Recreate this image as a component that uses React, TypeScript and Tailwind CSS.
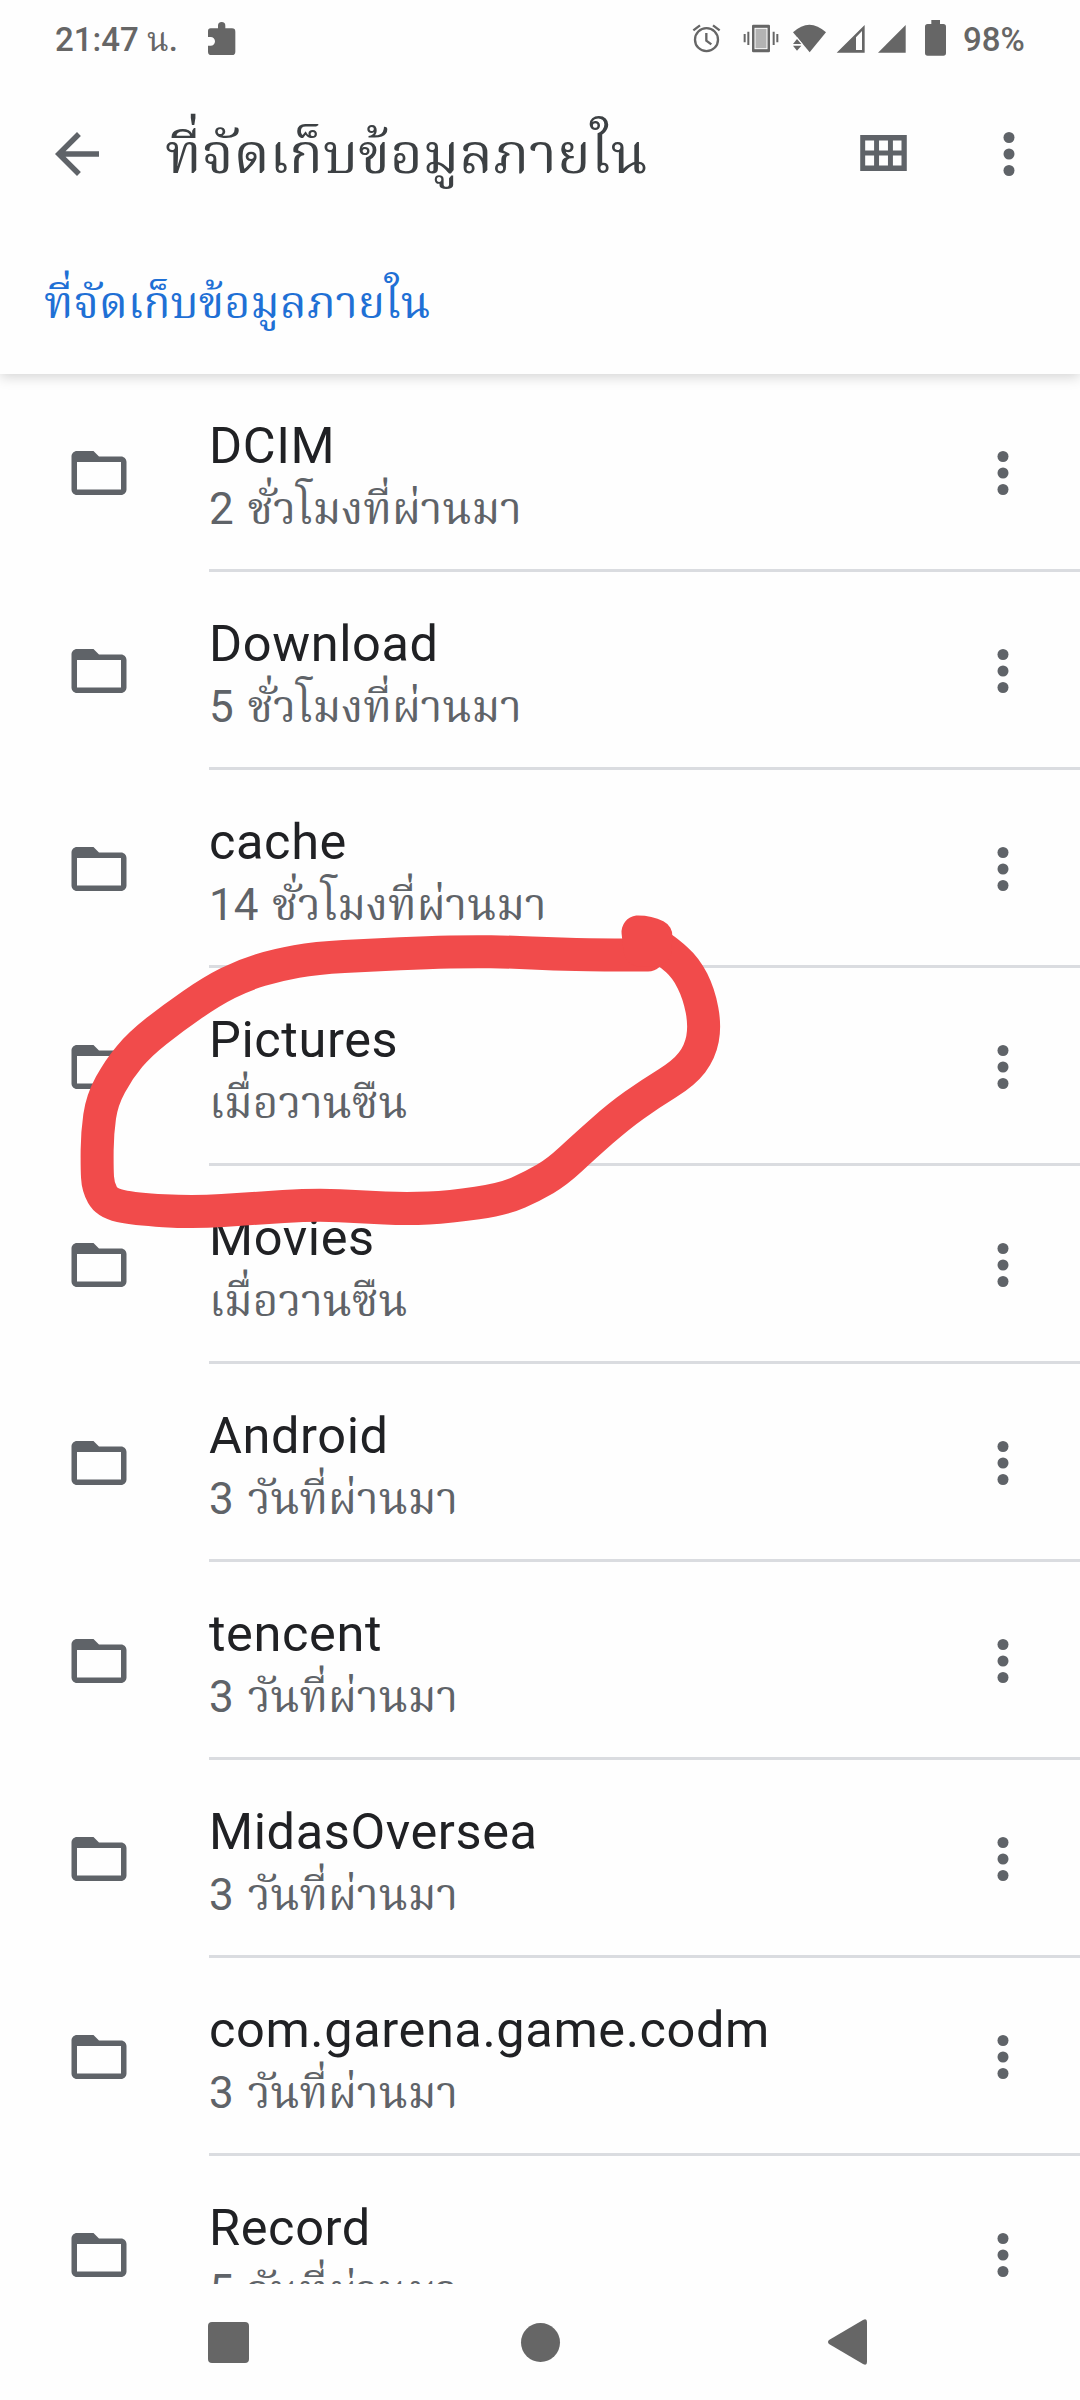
interface FolderItem {
  name: string;
  modified: string;
}

const folders: FolderItem[] = [
  { name: "DCIM", modified: "2 ชั่วโมงที่ผ่านมา" },
  { name: "Download", modified: "5 ชั่วโมงที่ผ่านมา" },
  { name: "cache", modified: "14 ชั่วโมงที่ผ่านมา" },
  { name: "Pictures", modified: "เมื่อวานซืน" },
  { name: "Movies", modified: "เมื่อวานซืน" },
  { name: "Android", modified: "3 วันที่ผ่านมา" },
  { name: "tencent", modified: "3 วันที่ผ่านมา" },
  { name: "MidasOversea", modified: "3 วันที่ผ่านมา" },
  { name: "com.garena.game.codm", modified: "3 วันที่ผ่านมา" },
  { name: "Record", modified: "5 วันที่ผ่านมา" },
];

// Points of the hand-drawn marker stroke, in screen pixels
const markerPoints: [number, number][] = [
  [648, 955], [598, 955], [554, 954], [510, 952], [472, 951.5], [428, 952.5], [372, 955],
  [316, 958], [277, 965], [244, 975], [212, 991], [173, 1018], [140, 1044],
  [119, 1069], [102, 1100], [97.3, 1133], [97, 1167], [98, 1187], [107, 1203],
  [134, 1209], [194, 1212.5], [251, 1208.5], [316, 1204.5], [363, 1207], [407, 1209],
  [450, 1207], [504, 1199], [533, 1186], [557, 1172], [585, 1146], [619, 1116],
  [650, 1094], [684, 1073], [700, 1052], [705, 1026], [699, 994], [686, 968],
  [668, 952], [656, 944],
];

// Smooths the points with quadratic curves through their midpoints
const toPath = (points: [number, number][]) => {
  let d = `M${points[0][0]} ${points[0][1]}`;
  for (let i = 1; i < points.length - 1; i++) {
    const [x, y] = points[i];
    const [nx, ny] = points[i + 1];
    d += ` Q${x} ${y} ${(x + nx) / 2} ${(y + ny) / 2}`;
  }
  const last = points[points.length - 1];
  return `${d} L${last[0]} ${last[1]}`;
};

const MoreIcon = () => (
  <svg viewBox="0 0 24 24" className="size-[66px] shrink-0 fill-[#5f6368]">
    <circle cx="12" cy="6" r="2" />
    <circle cx="12" cy="12" r="2" />
    <circle cx="12" cy="18" r="2" />
  </svg>
);

const FolderIcon = () => (
  <svg viewBox="0 0 24 24" className="size-[66px] shrink-0 fill-[#5f6368]">
    <path d="M20 6h-8l-2-2H4c-1.1 0-2 .9-2 2v12c0 1.1.9 2 2 2h16c1.1 0 2-.9 2-2V8c0-1.1-.9-2-2-2zm0 12H4V8h16v10z" />
  </svg>
);

const StatusBar = () => (
  <div className="flex h-[77px] items-start pl-[55px] text-[33px] font-medium text-[#666]">
    <span className="mt-[19px] w-[152px] leading-[42px] whitespace-nowrap">
      21:47 <span className="font-normal">น</span>.
    </span>
    <svg viewBox="621 57 87 114" className="mt-[19px] h-[38px] w-[29px] fill-[#666]">
      <path d="M632 85h22v-8a11 11 0 0 1 22 0v8h20q10 0 10 10v60q0 10-10 10h-62q-10 0-10-10v-18h8a13 13 0 0 0 0-26h-8V93q0-8 8-8z" />
    </svg>
    <div className="mt-[19px] ml-auto flex w-[388px] fill-[#666]">
      <svg viewBox="96 57 87 114" className="h-[38px] w-[29px]">
        <circle cx="139.5" cy="119" r="34.5" fill="none" stroke="#666" strokeWidth="7" />
        <path d="M139 99v23l15 11" fill="none" stroke="#666" strokeWidth="7" />
        <path d="M100 91l20-15M179 91l-20-15" stroke="#666" strokeWidth="7" />
      </svg>
      <svg viewBox="249 57 108 114" className="ml-[22px] h-[38px] w-[36px]">
        <rect x="276" y="74" width="54" height="83" rx="4" />
        <rect x="285" y="85" width="36" height="61" fill="#b3b3b3" stroke="#fff" strokeWidth="3" />
        <path d="M254 102v25M265 95v40M341 95v40M352 102v25" stroke="#666" strokeWidth="6" />
      </svg>
      <svg viewBox="396 57 102 114" className="ml-[13px] h-[38px] w-[34px]">
        <path d="M399 97Q448 51 498 97L449 157z" />
        <path d="M396 132L411 111L428 132v5L411 157L396 137z" fill="#fefefe" />
        <path d="M399 132L411 117L424 132zM399 137h25L411 152z" />
      </svg>
      <svg viewBox="528 57 87 114" className="ml-[10px] h-[38px] w-[29px]">
        <path fillRule="evenodd" d="M530 158L614 75V158zM588 112V150H606V93z" />
      </svg>
      <svg viewBox="651 57 87 114" className="ml-[12px] h-[38px] w-[29px]">
        <path d="M654 158L737 75V158z" />
      </svg>
      <svg viewBox="792 57 69 114" className="ml-[18px] h-[38px] w-[23px]">
        <path d="M814 60h26v12h10q8 0 8 8v79q0 8-8 8h-47q-8 0-8-8V80q0-8 8-8h11z" />
      </svg>
      <span className="ml-[16px] leading-[42px]">98%</span>
    </div>
  </div>
);

const Header = () => (
  <header className="relative h-[374px] shadow-[0_3px_12px_rgba(0,0,0,0.17)]">
    <StatusBar />
    <div className="flex h-[154px] items-center pr-[38px] pl-[44px]">
      <svg viewBox="0 0 24 24" className="size-[66px] fill-[#5f6368]">
        <path d="M20 11H7.83l5.59-5.59L12 4l-8 8 8 8 1.41-1.41L7.83 13H20v-2z" />
      </svg>
      <h1 className="ml-[55px] flex-1 text-[56.2px] leading-[80px] whitespace-nowrap text-[#3c4043]">
        ที่จัดเก็บข้อมูลภายใน
      </h1>
      <svg viewBox="600 403 141 109" className="mr-[69px] mb-[3px] h-[36px] w-[47px] fill-[#5f6368]">
        <path
          fillRule="evenodd"
          d="M600 403h141v109H600zM615 420v30h27v-30zM657 420v30h27v-30zM699 420v30h26v-30zM615 465v30h27v-30zM657 465v30h27v-30zM699 465v30h26v-30z"
        />
      </svg>
      <MoreIcon />
    </div>
    <div className="flex h-[143px] items-center pl-[44px] text-[45px] leading-[66px] text-[#1f70d5]">
      ที่จัดเก็บข้อมูลภายใน
    </div>
  </header>
);

const FolderRow = ({ name, modified }: FolderItem) => (
  <li className="flex h-[198px] shrink-0 items-center pl-[66px]">
    <FolderIcon />
    <div className="ml-[77px] flex h-full flex-1 items-center border-b-[3px] border-[#dadce0] pt-[3px] pr-[44px]">
      <div className="h-[114px] flex-1 whitespace-nowrap">
        <p className="h-[63px] text-[50.5px] leading-[60px] tracking-[0.6px] text-[#202124]">{name}</p>
        <p className="h-[60px] text-[44px] leading-[60px] [word-spacing:3px] text-[#5f6368]">{modified}</p>
      </div>
      <MoreIcon />
    </div>
  </li>
);

const NavigationBar = () => (
  <nav className="flex h-[116px] items-center justify-between bg-[#fefefe] pr-[213px] pl-[208px]">
    <div className="size-[41px] rounded-[4px] bg-[#666]" />
    <div className="ml-[3px] size-[39px] rounded-full bg-[#666]" />
    <svg viewBox="0 0 39 46" className="h-[46px] w-[39px] fill-[#666]">
      <path d="M1 21L35 1q4-2 4 2v40q0 4-4 2L1 25q-2-2 0-4z" />
    </svg>
  </nav>
);

const App = () => {
  return (
    <div className="relative flex h-[2400px] w-[1080px] flex-col overflow-hidden bg-[#fefefe] font-['Roboto','Noto_Serif_Thai',sans-serif]">
      <Header />
      <ul className="flex min-h-0 flex-1 flex-col overflow-hidden">
        {folders.map((folder) => (
          <FolderRow key={folder.name} {...folder} />
        ))}
      </ul>
      <NavigationBar />
      <svg
        viewBox="0 0 1080 2400"
        className="pointer-events-none absolute inset-0 h-[2400px] w-[1080px]"
        fill="none"
        stroke="#f14b4b"
        strokeWidth="33"
        strokeLinecap="round"
        strokeLinejoin="round"
      >
        <path d={toPath(markerPoints)} />
        <path d="M638 932Q648 932 656 936L655 950L640 950z" />
      </svg>
    </div>
  );
};

export default App;
